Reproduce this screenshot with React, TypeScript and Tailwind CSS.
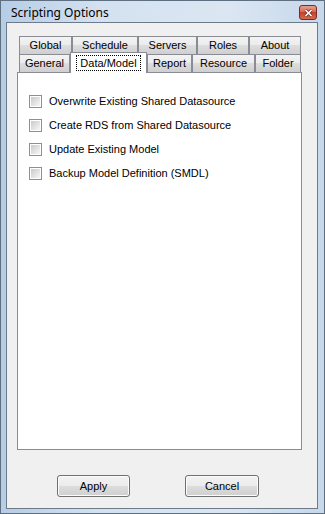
import React from 'react';

const backRow = [
  { label: 'Global', w: 'w-[53px]' },
  { label: 'Schedule', w: 'w-[66px]' },
  { label: 'Servers', w: 'w-[59px]' },
  { label: 'Roles', w: 'w-[52px]' },
  { label: 'About', w: 'w-[52px]' },
];

const frontRow = [
  { label: 'General', w: 'w-[51px]' },
  { label: 'Data/Model', w: 'w-[77px]', active: true },
  { label: 'Report', w: 'w-[45px]' },
  { label: 'Resource', w: 'w-[63px]' },
  { label: 'Folder', w: 'w-[46px]' },
];

const options = [
  'Overwrite Existing Shared Datasource',
  'Create RDS from Shared Datasource',
  'Update Existing Model',
  'Backup Model Definition (SMDL)',
];

const Tab = ({ label, w, active }: { label: string; w: string; active?: boolean }) => {
  if (active) {
    return (
      <div
        className={`${w} h-[21px] -mt-[2px] -mb-px relative z-10 flex items-center justify-center border border-b-0 border-[#898c95] bg-white`}
      >
        <span className="px-[3px] leading-[14px] border border-dotted border-black">{label}</span>
      </div>
    );
  }
  return (
    <div
      className={`${w} h-[18px] flex items-center justify-center border border-b-0 border-[#898c95] bg-[linear-gradient(#f3f3f3,#ebebeb_50%,#dddddd_50%,#cfcfcf)]`}
    >
      {label}
    </div>
  );
};

const CheckRow = ({ text }: { text: string }) => (
  <label className="flex items-center h-[24px]">
    <span className="w-[13px] h-[13px] border border-[#8e8f8f] bg-white p-px">
      <span className="block w-full h-full bg-[linear-gradient(135deg,#cbcbcb,#f6f6f6)]" />
    </span>
    <span className="ml-[7px]">{text}</span>
  </label>
);

const Button = ({ text, w }: { text: string; w: string }) => (
  <button
    className={`${w} h-[22px] rounded-[3px] border border-[#707070] bg-[linear-gradient(#f2f2f2,#ebebeb_50%,#dddddd_50%,#cfcfcf)] shadow-[inset_0_0_0_1px_#fcfcfc] text-black`}
  >
    {text}
  </button>
);

export default function App() {
  return (
    <div className="w-[325px] h-[514px] flex flex-col border border-[#5f6f82] bg-[linear-gradient(90deg,#b6cde6,#d3e1f0_30%,#dbe6f2_70%,#c6d8eb)] text-[11px] text-black font-['Liberation_Sans',Arial,sans-serif]">
      {/* title bar */}
      <div className="h-[21px] flex items-center pl-[10px] pr-[7px]">
        <span className="flex-1 text-[12px] text-black font-['Noto_Sans','Open_Sans',sans-serif] pt-[2px]">
          Scripting Options
        </span>
        <div className="w-[18px] h-[15px] mt-[2px] rounded-[3px] border border-[#7a2a20] bg-[linear-gradient(#e8a08f,#d3634c_50%,#c0442c_50%,#d46a4b)] flex items-center justify-center">
          <svg width="9" height="8" viewBox="0 0 9 8">
            <path d="M1.5 1 L7.5 7 M7.5 1 L1.5 7" stroke="#6b2a20" strokeWidth="3" />
            <path d="M1.5 1 L7.5 7 M7.5 1 L1.5 7" stroke="#fff" strokeWidth="1.6" />
          </svg>
        </div>
      </div>

      {/* client area */}
      <div className="flex-1 mx-[5px] mr-[6px] mb-[4px] border border-[#6c7a89] bg-[#f0f0f0] flex flex-col pt-[13px] pl-[10px]">
        <div className="w-[285px]">
          <div className="flex pl-[2px]">
            {backRow.map((t) => (
              <Tab key={t.label} {...t} />
            ))}
          </div>
          <div className="flex pl-[2px] items-end h-[18px]">
            {frontRow.map((t) => (
              <Tab key={t.label} {...t} />
            ))}
          </div>
          <div className="h-[378px] border border-[#898c95] bg-white pl-[11px] pt-[16px]">
            {options.map((o) => (
              <CheckRow key={o} text={o} />
            ))}
          </div>
        </div>
        <div className="flex mt-[25px] pl-[40px] gap-[55px]">
          <Button text="Apply" w="w-[73px]" />
          <Button text="Cancel" w="w-[74px]" />
        </div>
      </div>
    </div>
  );
}
